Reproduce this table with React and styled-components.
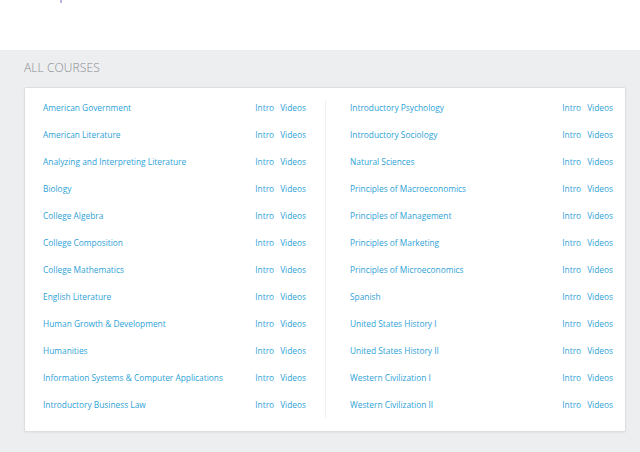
import React from "react";
import styled, { createGlobalStyle } from "styled-components";

const GlobalStyle = createGlobalStyle`
  html, body {
    margin: 0;
    padding: 0;
    background: #edeef0;
    font-family: "Open Sans", "Liberation Sans", sans-serif;
  }
`;

const TopBar = styled.div`
  height: 50px;
  background: #ffffff;
  position: relative;
`;

const Crumb = styled.span`
  position: absolute;
  left: 60px;
  top: 0;
  width: 2px;
  height: 3px;
  background: #b9b6e0;
`;

const Section = styled.section`
  padding: 10px 14px 20px 24px;
`;

const Heading = styled.h2`
  margin: 0 0 11px;
  font-size: 12px;
  font-weight: 300;
  color: #8a8c90;
  letter-spacing: 0.1px;
  line-height: 16px;
`;

const Card = styled.div`
  background: #ffffff;
  border: 1px solid #dcdee1;
  border-radius: 2px;
  box-shadow: 0 1px 2px rgba(0, 0, 0, 0.05);
  display: grid;
  grid-template-columns: 300px 1fr;
  padding: 6px 0 13px;
`;

const Column = styled.div`
  position: relative;
  padding: ${(p) => (p.$right ? "0 12px 0 25px" : "0 19px 0 18px")};

  ${(p) =>
    p.$right &&
    `
    &::before {
      content: "";
      position: absolute;
      left: 0;
      top: 7px;
      bottom: 0;
      border-left: 1px solid #eeeff0;
    }
  `}
`;

const Row = styled.div`
  height: 27px;
  display: flex;
  align-items: center;
  justify-content: space-between;
  font-size: 8.35px;
  color: #2ea2d6;
`;

const Name = styled.a`
  color: inherit;
  text-decoration: none;
`;

const Links = styled.div`
  display: flex;
  gap: 6px;
`;

const left = [
  "American Government",
  "American Literature",
  "Analyzing and Interpreting Literature",
  "Biology",
  "College Algebra",
  "College Composition",
  "College Mathematics",
  "English Literature",
  "Human Growth & Development",
  "Humanities",
  "Information Systems & Computer Applications",
  "Introductory Business Law",
];

const right = [
  "Introductory Psychology",
  "Introductory Sociology",
  "Natural Sciences",
  "Principles of Macroeconomics",
  "Principles of Management",
  "Principles of Marketing",
  "Principles of Microeconomics",
  "Spanish",
  "United States History I",
  "United States History II",
  "Western Civilization I",
  "Western Civilization II",
];

const CourseRow = ({ name }) => (
  <Row>
    <Name href="#">{name}</Name>
    <Links>
      <Name href="#">Intro</Name>
      <Name href="#">Videos</Name>
    </Links>
  </Row>
);

const App = () => (
  <>
    <GlobalStyle />
    <TopBar>
      <Crumb />
    </TopBar>
    <Section>
      <Heading>ALL COURSES</Heading>
      <Card>
        <Column>
          {left.map((c) => (
            <CourseRow key={c} name={c} />
          ))}
        </Column>
        <Column $right>
          {right.map((c) => (
            <CourseRow key={c} name={c} />
          ))}
        </Column>
      </Card>
    </Section>
  </>
);

export default App;
